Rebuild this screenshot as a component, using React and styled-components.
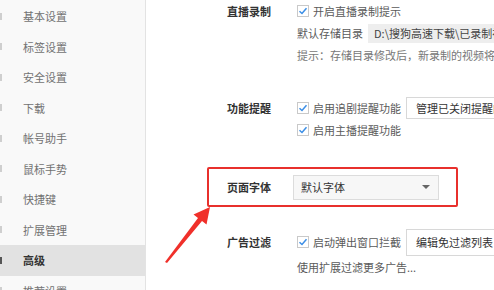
import React from 'react';
import styled, { createGlobalStyle } from 'styled-components';

const GlobalStyle = createGlobalStyle`
  html, body {
    margin: 0;
    padding: 0;
    background: #fff;
    overflow: hidden;
  }
  body {
    font-family: "Noto Sans CJK SC", "Noto Sans", sans-serif;
  }
`;

const Page = styled.div`
  position: relative;
  width: 494px;
  height: 290px;
  display: flex;
  overflow: hidden;
  background: #fff;
`;

const Sidebar = styled.div`
  width: 145px;
  flex-shrink: 0;
  background: #f9f9f9;
  border-right: 1px solid #e3e3e3;
  padding-top: 1px;
  overflow: hidden;
`;

const NavItem = styled.div`
  height: 30.5px;
  display: flex;
  align-items: center;
  gap: 21px;
  font-size: 11px;
  color: ${p => (p.$active ? '#333' : '#727272')};
  font-weight: ${p => (p.$active ? 600 : 400)};
  background: ${p => (p.$active ? '#e2e2e2' : 'transparent')};
`;

const NavIcon = styled.span`
  width: 12px;
  height: 7px;
  margin-left: -10px;
  border-right: 2px solid ${p => (p.$active ? '#555' : '#cfcfcf')};
  box-sizing: border-box;
`;

const Main = styled.div`
  flex: 1;
  padding-left: 81px;
  display: flex;
  flex-direction: column;
  font-size: 11px;
  color: #5a5a5a;
`;

const Section = styled.div`
  display: flex;
  margin-top: ${p => p.$top || 0}px;
`;

const FramedSection = styled(Section)`
  margin-left: -20px;
  padding-left: 18px;
  width: 251px;
  height: 40px;
  box-sizing: border-box;
  border: 2px solid #e8302c;
  border-radius: 2px;
  align-items: center;
`;

const Label = styled.div`
  width: 70px;
  flex-shrink: 0;
  font-weight: 700;
  color: #333;
  line-height: ${p => p.$lh || 22}px;
`;

const Controls = styled.div`
  display: flex;
  flex-direction: column;
  min-width: 0;
`;

const Line = styled.div`
  height: ${p => p.$h || 22}px;
  display: flex;
  align-items: center;
  white-space: nowrap;
  color: ${p => (p.$muted ? '#777' : '#5a5a5a')};
`;

const Box = styled.span`
  width: 12px;
  height: 12px;
  box-sizing: border-box;
  border: 1px solid #c9c9c9;
  background: #fff;
  margin-right: 4px;
  display: inline-flex;
  align-items: center;
  justify-content: center;
  flex-shrink: 0;
`;

const PathField = styled.div`
  margin-left: 5px;
  height: 19px;
  padding: 0 6px;
  background: #eeeeee;
  display: flex;
  align-items: center;
  color: #444;
  width: 160px;
  overflow: hidden;
`;

const Button = styled.div`
  margin-left: 5px;
  height: ${p => p.$h || 22}px;
  padding: 0 9px;
  border: 1px solid #d8d8d8;
  background: #fff;
  color: #333;
  display: flex;
  align-items: center;
  box-sizing: border-box;
  white-space: nowrap;
`;

const Select = styled.div`
  width: 146px;
  height: 25px;
  box-sizing: border-box;
  border: 1px solid #dcdcdc;
  background: #f7f7f7;
  margin-left: -4px;
  padding: 0 8px 0 7px;
  display: flex;
  align-items: center;
  justify-content: space-between;
  color: #333;
`;

const Caret = styled.span`
  width: 0;
  height: 0;
  border-left: 4px solid transparent;
  border-right: 4px solid transparent;
  border-top: 4px solid #666;
`;

const Arrow = styled.svg`
  position: absolute;
  left: 0;
  top: 0;
  pointer-events: none;
`;

const Check = () => (
  <Box>
    <svg width="10" height="10" viewBox="0 0 10 10">
      <path d="M1.5 5.2 L4 7.5 L8.5 2.2" fill="none" stroke="#3b8ee6" strokeWidth="1.5" />
    </svg>
  </Box>
);

const nav = ['基本设置', '标签设置', '安全设置', '下载', '帐号助手', '鼠标手势', '快捷键', '扩展管理', '高级', '推荐设置'];

export default function App() {
  return (
    <Page>
      <GlobalStyle />
      <Sidebar>
        {nav.map(n => (
          <NavItem key={n} $active={n === '高级'}>
            <NavIcon $active={n === '高级'} />
            {n}
          </NavItem>
        ))}
      </Sidebar>
      <Main>
        <Section>
          <Label>直播录制</Label>
          <Controls>
            <Line><Check />开启直播录制提示</Line>
            <Line>默认存储目录<PathField>D:\搜狗高速下载\已录制视频</PathField></Line>
            <Line $muted>提示：存储目录修改后，新录制的视频将存储到新目录</Line>
          </Controls>
        </Section>
        <Section $top={31}>
          <Label>功能提醒</Label>
          <Controls>
            <Line><Check />启用追剧提醒功能<Button>管理已关闭提醒的视频</Button></Line>
            <Line><Check />启用主播提醒功能</Line>
          </Controls>
        </Section>
        <FramedSection $top={26}>
          <Label $lh={36}>页面字体</Label>
          <Select>默认字体<Caret /></Select>
        </FramedSection>
        <Section $top={21}>
          <Label $lh={28}>广告过滤</Label>
          <Controls>
            <Line $h={28}><Check />启动弹出窗口拦截<Button $h={27}>编辑免过滤列表</Button></Line>
            <Line>使用扩展过滤更多广告...</Line>
          </Controls>
        </Section>
      </Main>
      <Arrow width="494" height="290" viewBox="0 0 494 290">
        <polygon points="165,262 198,218 193.5,214.5 210,207 206.5,224.5 202,221 167,263" fill="#f0302a" />
      </Arrow>
    </Page>
  );
}
